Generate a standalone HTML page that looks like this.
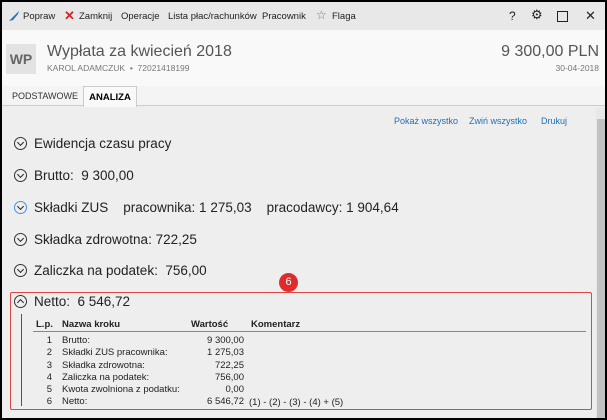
<!DOCTYPE html>
<html><head><meta charset="utf-8"><style>
*{margin:0;padding:0;box-sizing:border-box}
body{width:607px;height:420px;overflow:hidden;font-family:"Liberation Sans",sans-serif;background:#000;position:relative}
.win{position:absolute;left:2px;top:2px;width:603px;height:416px;background:#eeeeee;overflow:hidden}
.tb{position:absolute;left:0;top:0;width:603px;height:28px;background:#e8e8e8;font-size:9.5px;color:#222}
.tb span{position:absolute;top:9px;white-space:nowrap}
.hdr{position:absolute;left:0;top:28px;width:603px;height:56px;background:#f9f9f9}
.tabs{position:absolute;left:0;top:84px;width:603px;height:20px;background:#f4f4f4;border-bottom:1px solid #ccc}
.a{position:absolute;white-space:nowrap}
.row{position:absolute;left:12px;font-size:13.5px;color:#222;white-space:nowrap}
.ci{display:inline-block;width:13px;height:13px;border:1px solid #333;border-radius:50%;vertical-align:-2px;margin-right:7px;position:relative}
.ci:after{content:"";position:absolute;left:3px;top:2px;width:4px;height:4px;border-right:1.3px solid #222;border-bottom:1.3px solid #222;transform:rotate(45deg)}
.ci.up:after{top:4px;transform:rotate(-135deg)}
.t{position:absolute;font-size:9.5px;color:#222;white-space:nowrap}
.r{text-align:right}
</style></head><body><div class="win">
<div class="tb">
<svg class="a" style="left:6px;top:8px" width="12" height="12"><path d="M1 11 L4 8 L11 1 L10 4 L5 10 Z" fill="#1f6fb5"/></svg>
<span style="left:21px">Popraw</span>
<span style="left:62px;color:#d22;font-size:13px;top:6px;font-weight:bold">✕</span>
<span style="left:77px">Zamknij</span>
<span style="left:119px">Operacje</span>
<span style="left:166px">Lista płac/rachunków</span>
<span style="left:260px">Pracownik</span>
<span style="left:314px;top:6px;font-size:12px;color:#777">☆</span>
<span style="left:330px">Flaga</span>
<span style="left:507px;font-size:12px;top:7px">?</span>
<span style="left:529px;font-size:13px;top:5px">⚙</span>
<div class="a" style="left:555px;top:9px;width:11px;height:11px;border:1.3px solid #222"></div>
<span style="left:583px;font-size:13px;top:6px">✕</span>
</div>
<div class="hdr">
<div class="a" style="left:4px;top:14px;width:30px;height:30px;background:#e3e3e3;color:#666;font-size:14px;font-weight:bold;text-align:center;line-height:30px">WP</div>
<div class="a" style="left:45px;top:13px;font-size:16px;color:#555">Wypłata za kwiecień 2018</div>
<div class="a" style="left:45px;top:33px;font-size:8.5px;color:#777">KAROL ADAMCZUK &nbsp;•&nbsp; 72021418199</div>
<div class="a" style="right:6px;top:13px;font-size:16px;color:#555">9 300,00 PLN</div>
<div class="a" style="right:6px;top:33px;font-size:8.5px;color:#777">30-04-2018</div>
</div>
<div class="tabs">
<div class="a" style="left:10px;top:5px;font-size:9px;color:#333">PODSTAWOWE</div>
<div class="a" style="left:81px;top:0;width:54px;height:21px;background:#f9f9f9;border:1px solid #ccc;border-bottom:none;font-size:9.5px;font-weight:bold;text-align:center;padding-top:5px">ANALIZA</div>
</div>
<div class="a" style="left:594px;top:106px;width:9px;height:310px;background:#e8e8e8"></div>
<div class="a" style="left:595px;top:117px;width:8px;height:299px;background:#c2c2c2"></div>
<div class="a" style="left:392px;top:114px;font-size:9px;color:#1f6fb5">Pokaż wszystko</div>
<div class="a" style="left:467px;top:114px;font-size:9px;color:#1f6fb5">Zwiń wszystko</div>
<div class="a" style="left:539px;top:114px;font-size:9px;color:#1f6fb5">Drukuj</div>
<div class="row" style="top:134px"><span class="ci"></span>Ewidencja czasu pracy</div>
<div class="row" style="top:166px"><span class="ci"></span>Brutto:&nbsp; 9 300,00</div>
<div class="row" style="top:198px"><span class="ci" style="border-color:#4a90e2"></span>Składki ZUS &nbsp;&nbsp; pracownika: 1 275,03 &nbsp;&nbsp; pracodawcy: 1 904,64</div>
<div class="row" style="top:230px"><span class="ci"></span>Składka zdrowotna: 722,25</div>
<div class="row" style="top:261px"><span class="ci"></span>Zaliczka na podatek:&nbsp; 756,00</div>
<div class="a" style="left:8px;top:290px;width:582px;height:118px;border:1.5px solid #e04545;border-radius:2px"></div>
<div class="a" style="left:277px;top:271px;width:19px;height:19px;border-radius:50%;background:#e02b2b;color:#fff;font-size:11px;text-align:center;line-height:19px">6</div>
<div class="row" style="top:292px"><span class="ci up"></span>Netto:&nbsp; 6 546,72</div>
<div class="a" style="left:19px;top:312px;width:1px;height:92px;background:#555"></div>
<div class="t" style="left:34px;top:317px;font-weight:bold">L.p.</div>
<div class="t" style="left:60px;top:317px;font-weight:bold">Nazwa kroku</div>
<div class="t" style="left:189px;top:317px;font-weight:bold">Wartość</div>
<div class="t" style="left:249px;top:317px;font-weight:bold">Komentarz</div>
<div class="a" style="left:31px;top:329px;width:553px;height:1px;background:#888"></div>
<div class="t" style="left:40px;top:333px;line-height:12.3px;text-align:right;width:10px">1<br>2<br>3<br>4<br>5<br>6</div>
<div class="t" style="left:60px;top:333px;line-height:12.3px">Brutto:<br>Składki ZUS pracownika:<br>Składka zdrowotna:<br>Zaliczka na podatek:<br>Kwota zwolniona z podatku:<br>Netto:</div>
<div class="t r" style="left:180px;width:62px;top:333px;line-height:12.3px">9 300,00<br>1 275,03<br>722,25<br>756,00<br>0,00<br>6 546,72</div>
<div class="t" style="left:247px;top:394.5px">(1) - (2) - (3) - (4) + (5)</div>
</div></body></html>
